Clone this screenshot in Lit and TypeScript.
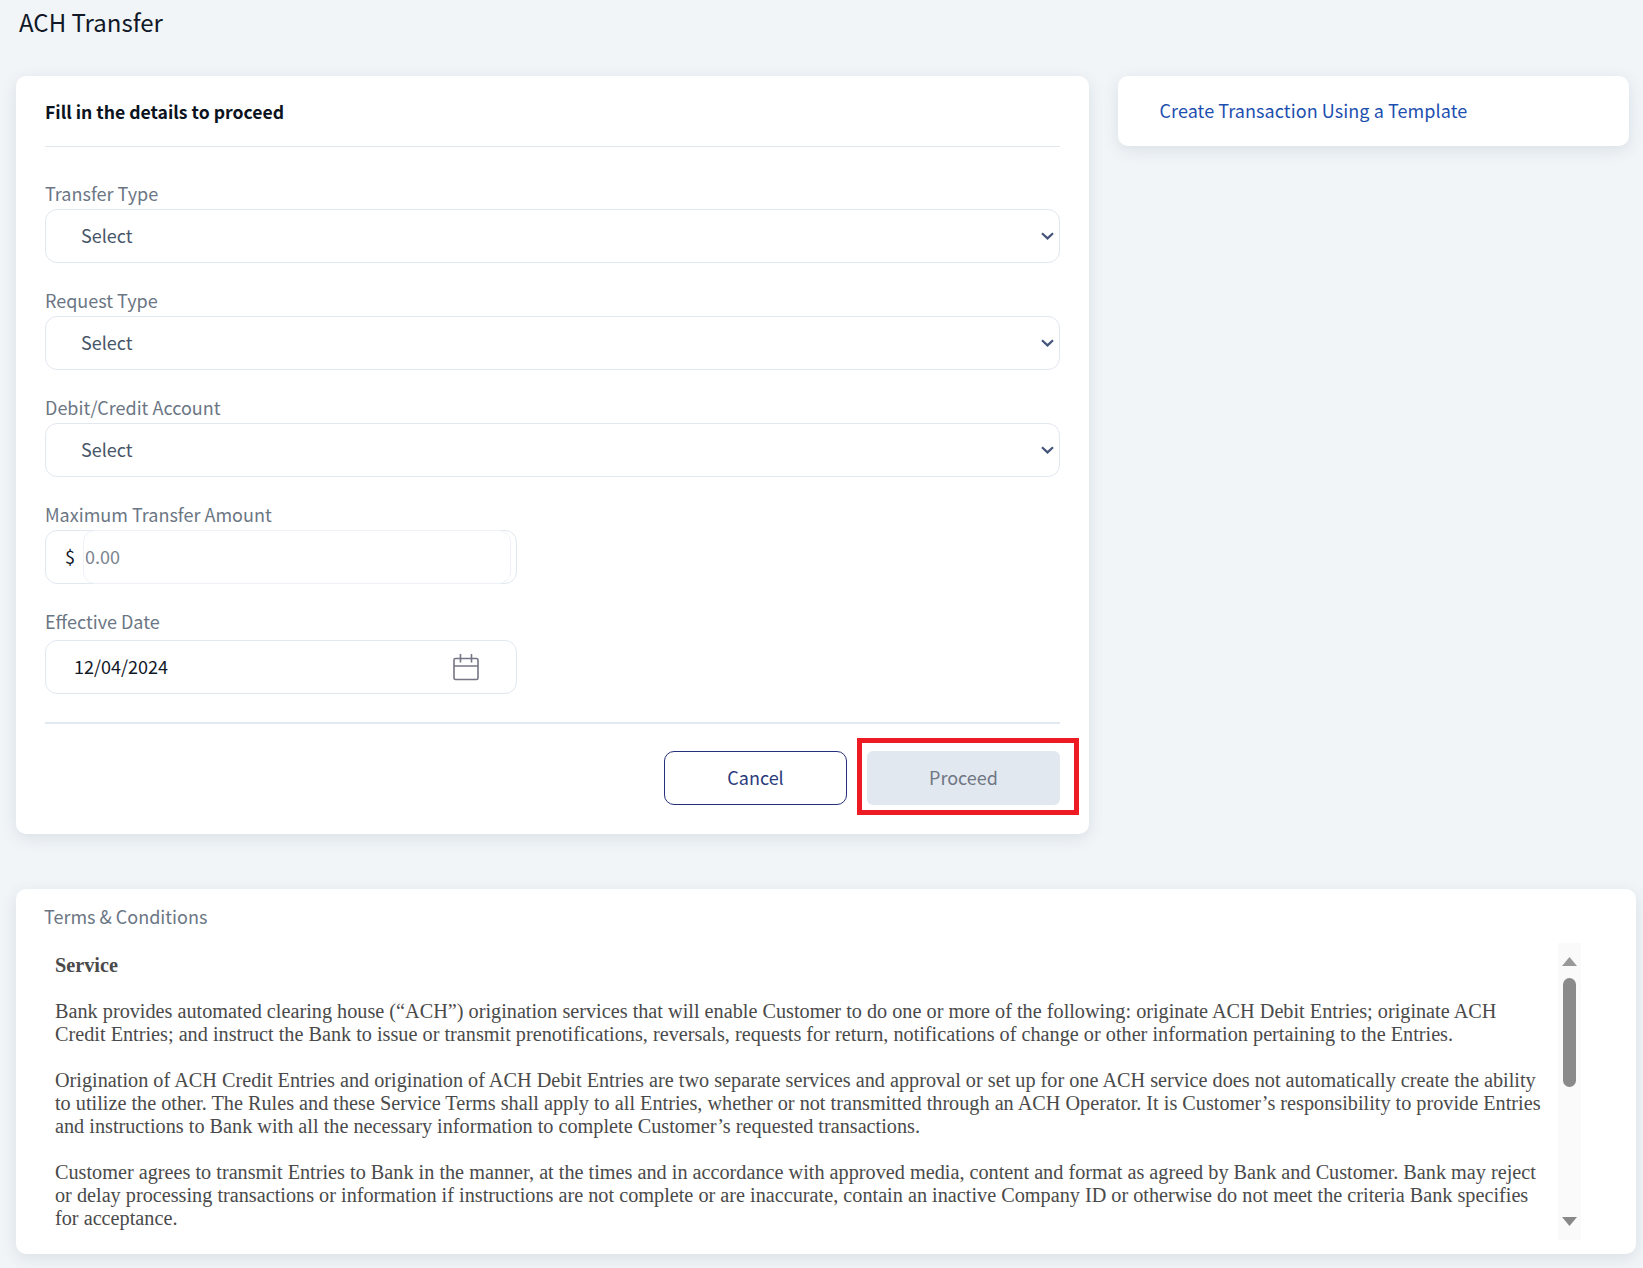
import { LitElement, html, css } from "lit";
import { customElement } from "lit/decorators.js";

const chevron = html`<svg class="chev" width="13" height="8" viewBox="0 0 13 8" fill="none"><path d="M1 1.2 6.5 6.4 12 1.2" stroke="#44547a" stroke-width="2.2"/></svg>`;

const TERMS = [
  [
    "Bank provides automated clearing house (“ACH”) origination services that will enable Customer to do one or more of the following: originate ACH Debit Entries; originate ACH",
    "Credit Entries; and instruct the Bank to issue or transmit prenotifications, reversals, requests for return, notifications of change or other information pertaining to the Entries.",
  ],
  [
    "Origination of ACH Credit Entries and origination of ACH Debit Entries are two separate services and approval or set up for one ACH service does not automatically create the ability",
    "to utilize the other. The Rules and these Service Terms shall apply to all Entries, whether or not transmitted through an ACH Operator. It is Customer’s responsibility to provide Entries",
    "and instructions to Bank with all the necessary information to complete Customer’s requested transactions.",
  ],
  [
    "Customer agrees to transmit Entries to Bank in the manner, at the times and in accordance with approved media, content and format as agreed by Bank and Customer. Bank may reject",
    "or delay processing transactions or information if instructions are not complete or are inaccurate, contain an inactive Company ID or otherwise do not meet the criteria Bank specifies",
    "for acceptance.",
  ],
];

@customElement("app-root")
export class AppRoot extends LitElement {
  static styles = css`
    :host {
      display: block;
      height: 1268px;
      box-sizing: border-box;
      background: #f1f5f8;
      font-family: "Noto Sans CJK SC", "Noto Sans", sans-serif;
      overflow: hidden;
    }
    .title {
      margin: 0;
      padding: 5px 0 0 19px;
      height: 76px;
      box-sizing: border-box;
      font-size: 24px;
      line-height: 34px;
      font-weight: 400;
      color: #111827;
    }
    .top {
      display: flex;
      align-items: flex-start;
      gap: 29px;
      padding-left: 16px;
    }
    .card {
      background: #fff;
      border-radius: 10px;
      box-shadow: 0 4px 16px rgba(60, 72, 100, 0.12);
    }
    .form {
      width: 1073px;
      height: 758px;
      box-sizing: border-box;
      padding: 0 29px;
      flex: none;
    }
    .head {
      height: 71px;
      box-sizing: border-box;
      border-bottom: 1px solid #e2e8f0;
      font-size: 17.6px;
      font-weight: 600;
      line-height: 72px;
      color: #0b1220;
    }
    .fields {
      padding-top: 35px;
    }
    .field {
      margin-bottom: 26px;
    }
    .field.narrow {
      width: 472px;
    }
    .label {
      display: block;
      height: 27px;
      font-size: 18px;
      line-height: 23px;
      color: #6b7684;
    }
    .control {
      height: 54px;
      box-sizing: border-box;
      border: 1px solid #e2e8f0;
      border-radius: 12px;
      display: flex;
      align-items: center;
      font-size: 18px;
      color: #475569;
    }
    .select {
      padding: 0 5px 2px 35px;
      justify-content: space-between;
    }
    .chev {
      display: block;
      position: relative;
      top: 1px;
    }
    .amount {
      position: relative;
      padding: 0 0 2px 19px;
      color: #111827;
    }
    .amount .inner {
      position: absolute;
      left: 37px;
      right: 5px;
      top: -1px;
      bottom: -1px;
      box-sizing: border-box;
      border: 1px solid #eef2f7;
      border-radius: 12px;
      padding: 0 0 2px 1px;
      display: flex;
      align-items: center;
      color: #7b8490;
    }
    .date {
      padding: 0 37px 2px 28px;
      justify-content: space-between;
      color: #111827;
      margin-top: 3px;
    }
    .date svg {
      position: relative;
      top: 1px;
    }
    .actions-rule {
      margin-top: 28px;
      border-top: 2px solid #e2e8f0;
    }
    .actions {
      display: flex;
      justify-content: flex-end;
      gap: 20px;
      padding-top: 27px;
    }
    .btn {
      height: 54px;
      box-sizing: border-box;
      border-radius: 10px;
      padding-bottom: 2px;
      display: flex;
      align-items: center;
      justify-content: center;
      font-size: 18px;
    }
    .cancel {
      width: 183px;
      border: 1px solid #27307a;
      color: #2a3a7c;
    }
    .proceed {
      width: 193px;
      border-radius: 6px;
      background: #e2e8f0;
      color: #6f7782;
      position: relative;
    }
    .proceed::after {
      content: "";
      position: absolute;
      inset: -13px -19px -10px -10px;
      border: 5px solid #ed1c24;
    }
    .template {
      width: 511px;
      height: 70px;
      box-sizing: border-box;
      padding: 0 0 2px 41.5px;
      display: flex;
      align-items: center;
      font-size: 18px;
      letter-spacing: 0.07px;
      color: #1d4fb0;
    }
    .terms {
      margin: 55px 7px 0 16px;
      height: 365px;
      box-sizing: border-box;
      padding: 13px 55px 0 28px;
      position: relative;
    }
    .terms-title {
      font-size: 18px;
      line-height: 28px;
      color: #6b7684;
    }
    .copy {
      margin-top: 24px;
      padding-left: 11px;
      font-family: "Liberation Serif", "Times New Roman", serif;
      font-size: 20.24px;
      line-height: 23px;
      color: #4a4a4a;
      white-space: nowrap;
    }
    .copy p {
      margin: 0 0 23px;
    }
    .copy span {
      display: block;
    }
    .bar {
      position: absolute;
      left: 1542px;
      top: 54px;
      width: 23px;
      height: 297px;
      background: #fafafa;
    }
    .thumb {
      position: absolute;
      left: 5px;
      top: 35px;
      width: 13px;
      height: 109px;
      border-radius: 7px;
      background: #8a8a8a;
    }
    .arrow {
      position: absolute;
      left: 4px;
      width: 15px;
      height: 9px;
      display: block;
    }
  `;

  render() {
    return html`
      <h1 class="title">ACH Transfer</h1>
      <div class="top">
        <section class="card form">
          <div class="head">Fill in the details to proceed</div>
          <div class="fields">
            ${["Transfer Type", "Request Type", "Debit/Credit Account"].map(
              (l) => html`<div class="field">
                <span class="label">${l}</span>
                <div class="control select"><span>Select</span>${chevron}</div>
              </div>`
            )}
            <div class="field narrow">
              <span class="label">Maximum Transfer Amount</span>
              <div class="control amount">$<div class="inner">0.00</div></div>
            </div>
            <div class="field narrow">
              <span class="label">Effective Date</span>
              <div class="control date">
                <span>12/04/2024</span>
                <svg width="26" height="27" viewBox="0 0 26 27" fill="none" stroke="#757685" stroke-width="1.6">
                  <rect x="1" y="4.5" width="24" height="21" rx="1.5" />
                  <path d="M1 12h24M7.5 0v8.5M18.5 0v8.5" />
                </svg>
              </div>
            </div>
          </div>
          <div class="actions-rule"></div>
          <div class="actions">
            <div class="btn cancel">Cancel</div>
            <div class="btn proceed">Proceed</div>
          </div>
        </section>
        <section class="card template">Create Transaction Using a Template</section>
      </div>
      <section class="card terms">
        <div class="terms-title">Terms &amp; Conditions</div>
        <div class="copy">
          <p><b>Service</b></p>
          ${TERMS.map(
            (p) => html`<p>${p.map((line) => html`<span>${line}</span>`)}</p>`
          )}
        </div>
        <div class="bar">
          <svg class="arrow" style="top:14px" viewBox="0 0 15 9"><path d="M7.5 0 15 9H0z" fill="#999" /></svg>
          <div class="thumb"></div>
          <svg class="arrow" style="top:274px" viewBox="0 0 15 9"><path d="M0 0h15L7.5 9z" fill="#888" /></svg>
        </div>
      </section>
    `;
  }
}
